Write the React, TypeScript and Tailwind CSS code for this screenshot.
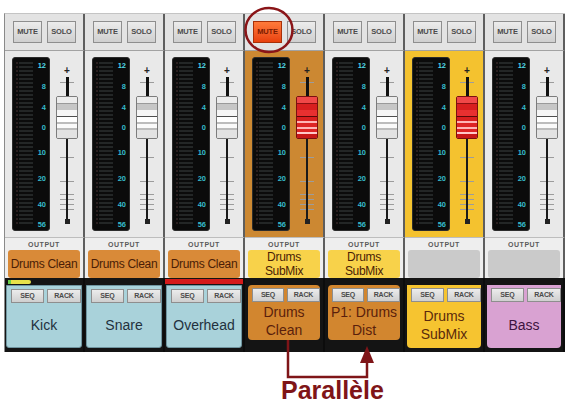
import React from "react"

type Channel = {
  id: string
  name: string[]
  out: string[]
  outBg: string
  midBg: string
  boxBg: string
  boxText: string
  boxShape: string
  knob: "white" | "red"
  muteOn?: boolean
  strip?: "kick" | "red"
}

const channels: Channel[] = [
  {
    id: "kick",
    name: ["Kick"],
    out: ["Drums Clean"],
    outBg: "bg-[#d98a38]",
    midBg: "bg-[#e9e9e9]",
    boxBg: "bg-[#a9d2da] border border-[#6f95a0]",
    boxText: "text-[#23313d]",
    boxShape: "mx-[1px] h-[63px] rounded-b-[3px]",
    knob: "white",
    strip: "kick",
  },
  {
    id: "snare",
    name: ["Snare"],
    out: ["Drums Clean"],
    outBg: "bg-[#d98a38]",
    midBg: "bg-[#e9e9e9]",
    boxBg: "bg-[#a9d2da] border border-[#6f95a0]",
    boxText: "text-[#23313d]",
    boxShape: "mx-[1px] h-[63px] rounded-b-[3px]",
    knob: "white",
  },
  {
    id: "overhead",
    name: ["Overhead"],
    out: ["Drums Clean"],
    outBg: "bg-[#d98a38]",
    midBg: "bg-[#e9e9e9]",
    boxBg: "bg-[#a9d2da] border border-[#6f95a0]",
    boxText: "text-[#23313d]",
    boxShape: "mx-[1px] h-[63px] rounded-b-[3px]",
    knob: "white",
    strip: "red",
  },
  {
    id: "clean",
    name: ["Drums", "Clean"],
    out: ["Drums", "SubMix"],
    outBg: "bg-[#f8d24a]",
    midBg: "bg-[#cc8832]",
    boxBg: "bg-[#d2862f]",
    boxText: "text-[#5a1f0c]",
    boxShape: "mx-[3px] h-[55px] rounded-[4px]",
    knob: "red",
    muteOn: true,
  },
  {
    id: "dist",
    name: ["P1: Drums", "Dist"],
    out: ["Drums", "SubMix"],
    outBg: "bg-[#f8d24a]",
    midBg: "bg-[#e9e9e9]",
    boxBg: "bg-[#d2862f]",
    boxText: "text-[#5a1f0c]",
    boxShape: "mx-[3px] h-[55px] rounded-[4px]",
    knob: "white",
  },
  {
    id: "submix",
    name: ["Drums", "SubMix"],
    out: [],
    outBg: "bg-[#cacaca]",
    midBg: "bg-[#f4c22f]",
    boxBg: "bg-[#f6c430]",
    boxText: "text-[#5a2a0c]",
    boxShape: "mx-[2px] h-[63px] rounded-b-[4px]",
    knob: "red",
  },
  {
    id: "bass",
    name: ["Bass"],
    out: [],
    outBg: "bg-[#cacaca]",
    midBg: "bg-[#e9e9e9]",
    boxBg: "bg-[#d9a2d2]",
    boxText: "text-[#3d1340]",
    boxShape: "mx-[2px] h-[63px] rounded-b-[4px]",
    knob: "white",
  },
]

// meter scale, margin classes give the uneven spacing of the dB marks
const scale = [
  { v: "12", mt: "mt-[4px]", c: "text-[#4fd8e8]" },
  { v: "8", mt: "mt-[13px]", c: "text-[#35bccb]" },
  { v: "4", mt: "mt-[13px]", c: "text-[#35bccb]" },
  { v: "0", mt: "mt-[12px]", c: "text-[#35bccb]" },
  { v: "10", mt: "mt-[17px]", c: "text-[#35bccb]" },
  { v: "20", mt: "mt-[18px]", c: "text-[#35bccb]" },
  { v: "40", mt: "mt-[18px]", c: "text-[#35bccb]" },
  { v: "56", mt: "mt-[12px]", c: "text-[#35bccb]" },
]

function SmallButton({ label, on, wide }: { label: string; on?: boolean; wide?: string }) {
  return (
    <div
      className={
        "flex items-center justify-center font-bold tracking-tight border " +
        (wide ?? "w-[29px] h-[22px] text-[7.5px]") +
        (on
          ? " bg-gradient-to-b from-[#ff7a3a] to-[#e8400c] border-[#a83008] text-[#7a1a00]"
          : " bg-gradient-to-b from-[#ececec] to-[#cfcfcf] border-[#8e8e8e] text-[#4a4a4a]")
      }
    >
      {label}
    </div>
  )
}

function Meter() {
  return (
    <div className="w-[38px] h-[174px] rounded-[3px] bg-[#0b0b0b] border border-[#2c2c2c] flex pt-[4px] pb-[4px]">
      <div className="ml-[3px] w-[2px] h-full bg-[repeating-linear-gradient(to_bottom,#2a1f1f_0px,#2a1f1f_2px,#0b0b0b_2px,#0b0b0b_4px)]" />
      <div className="ml-[1px] w-[14px] h-full bg-[repeating-linear-gradient(to_bottom,#232626_0px,#232626_2px,#0b0b0b_2px,#0b0b0b_4px)]" />
      <div className="flex flex-col items-end w-[13px] -mt-[4px]">
        {scale.map((s) => (
          <div key={s.v} className={"h-[8px] leading-[8px] text-[7.5px] font-bold " + s.mt + " " + s.c}>
            {s.v}
          </div>
        ))}
      </div>
    </div>
  )
}

function Knob({ kind }: { kind: "white" | "red" }) {
  if (kind === "red") {
    return (
      <div className="w-[22px] h-[43px] rounded-[2px] border border-[#7a1010] flex flex-col overflow-hidden">
        <div className="h-[6px] bg-[#f04848]" />
        <div className="h-[1px] bg-[#8a1010]" />
        <div className="h-[6px] bg-[#d81f1f]" />
        <div className="h-[6px] bg-[#e83030]" />
        <div className="h-[1px] bg-[#5a0808]" />
        <div className="h-[4px] bg-[#d81f1f]" />
        <div className="h-[2px] bg-[#ffb4b4]" />
        <div className="h-[4px] bg-[#dd2424]" />
        <div className="h-[2px] bg-[#ffb4b4]" />
        <div className="h-[3px] bg-[#dd2424]" />
        <div className="h-[2px] bg-[#ffc8c8]" />
        <div className="flex-1 bg-[#c81818]" />
      </div>
    )
  }
  return (
    <div className="w-[22px] h-[43px] rounded-[2px] border border-[#7c7c7c] flex flex-col overflow-hidden">
      <div className="h-[6px] bg-[#ececec]" />
      <div className="h-[1px] bg-[#9a9a9a]" />
      <div className="h-[6px] bg-[#c6c6c6]" />
      <div className="h-[6px] bg-[#f6f6f6]" />
      <div className="h-[1px] bg-[#4e4e4e]" />
      <div className="h-[5px] bg-white" />
      <div className="h-[2px] bg-[#bcbcbc]" />
      <div className="h-[4px] bg-[#fafafa]" />
      <div className="h-[2px] bg-[#bcbcbc]" />
      <div className="flex-1 bg-[#e2e2e2]" />
    </div>
  )
}

function Fader({ kind }: { kind: "white" | "red" }) {
  const ticks = ["top-[25px]", "top-[100px]", "top-[124px]", "top-[137px]", "top-[142px]", "top-[147px]", "top-[152px]"]
  return (
    <div className="relative w-[22px] h-[174px] flex flex-col items-center">
      {ticks.map((t) => (
        <div key={t} className={"absolute left-[4px] w-[14px] h-[1px] bg-[#9c9c9c] " + t} />
      ))}
      <div className="mt-[10px] h-[8px] w-[8px] flex items-center justify-center text-[#222] text-[10px] font-bold leading-[8px]">+</div>
      <div className="mt-[2px] h-[19px] w-[3px] bg-[#111] relative" />
      <div className="relative">
        <Knob kind={kind} />
      </div>
      <div className="h-[80px] w-[2px] bg-[#1a1a1a] relative" />
      <div className="h-[5px] w-[5px] bg-[#222] relative" />
    </div>
  )
}

function Strip({ ch }: { ch: Channel }) {
  return (
    <div className="w-[80px] flex flex-col">
      {/* mute / solo */}
      <div className="h-[37px] bg-[#e3e3e3] border-r-2 border-[#5e5e5e] border-b border-b-[#a2a2a2] flex gap-[5px] pl-[8px] pt-[7px]">
        <SmallButton label="MUTE" on={ch.muteOn} />
        <SmallButton label="SOLO" />
      </div>
      {/* meter + fader */}
      <div className={"h-[186px] border-r-2 border-[#5e5e5e] flex gap-[6px] pl-[7px] pt-[6px] " + ch.midBg}>
        <Meter />
        <Fader kind={ch.knob} />
      </div>
      {/* output */}
      <div className="h-[41px] bg-[#eeeeee] border-r-2 border-[#5e5e5e] border-t border-t-[#bdbdbd] flex flex-col items-center">
        <div className="mt-[2px] h-[9px] leading-[9px] text-[7px] font-bold tracking-[0.5px] text-[#5a5a5a]">OUTPUT</div>
        <div
          className={
            "mt-[1px] w-[72px] h-[28px] rounded-[3px] flex flex-col items-center justify-center text-[12px] leading-[14px] text-[#4a1d06] tracking-[-0.3px] " +
            ch.outBg
          }
        >
          {ch.out.map((l) => (
            <div key={l}>{l}</div>
          ))}
        </div>
      </div>
      {/* name box */}
      <div className="h-[74px] bg-[#141414] border-r-2 border-[#0c0c0c] flex flex-col">
        <div className="h-[7px] flex items-center">
          {ch.strip === "kick" && (
            <div className="ml-[3px] flex items-center h-[4px]">
              <div className="w-[3px] h-[4px] bg-[#6bd04a]" />
              <div className="w-[20px] h-[4px] bg-[#e8e24a] rounded-r-[2px]" />
            </div>
          )}
          {ch.strip === "red" && <div className="w-full h-[5px] bg-[#d41a1a]" />}
        </div>
        <div className={"flex flex-col " + ch.boxShape + " " + ch.boxBg}>
          <div className="flex gap-[3px] pl-[4px] pt-[3px]">
            <SmallButton label="SEQ" wide="w-[33px] h-[14px] text-[7px]" />
            <SmallButton label="RACK" wide="w-[34px] h-[14px] text-[7px]" />
          </div>
          <div className={"flex-1 flex flex-col items-center justify-center text-[14px] leading-[18px] whitespace-nowrap overflow-hidden " + ch.boxText}>
            {ch.name.map((l) => (
              <div key={l}>{l}</div>
            ))}
          </div>
        </div>
      </div>
    </div>
  )
}

export default function App() {
  return (
    <div className="relative w-[567px] h-[403px] bg-white overflow-hidden font-['Liberation_Sans',Arial,sans-serif]">
      <div className="ml-[4px] mt-[13px] flex w-[561px] border-l border-[#8a8a8a] border-t border-t-[#c4c4c4]">
        {channels.map((ch) => (
          <Strip key={ch.id} ch={ch} />
        ))}
      </div>

      <div className="pl-[281px] mt-[27px] text-[25px] leading-[22px] font-bold text-[#7f1518]">Parallèle</div>

      {/* annotations drawn over the mixer */}
      <svg className="absolute inset-0 pointer-events-none" width="567" height="403" viewBox="0 0 567 403">
        <ellipse cx="269" cy="30" rx="23.5" ry="22" fill="none" stroke="#8a1518" strokeWidth="2.5" />
        <polyline points="288,340 288,377 367,377 367,360" fill="none" stroke="#7f1518" strokeWidth="2.5" />
        <polygon points="360,363 374,363 367,346" fill="#7f1518" />
      </svg>
    </div>
  )
}
